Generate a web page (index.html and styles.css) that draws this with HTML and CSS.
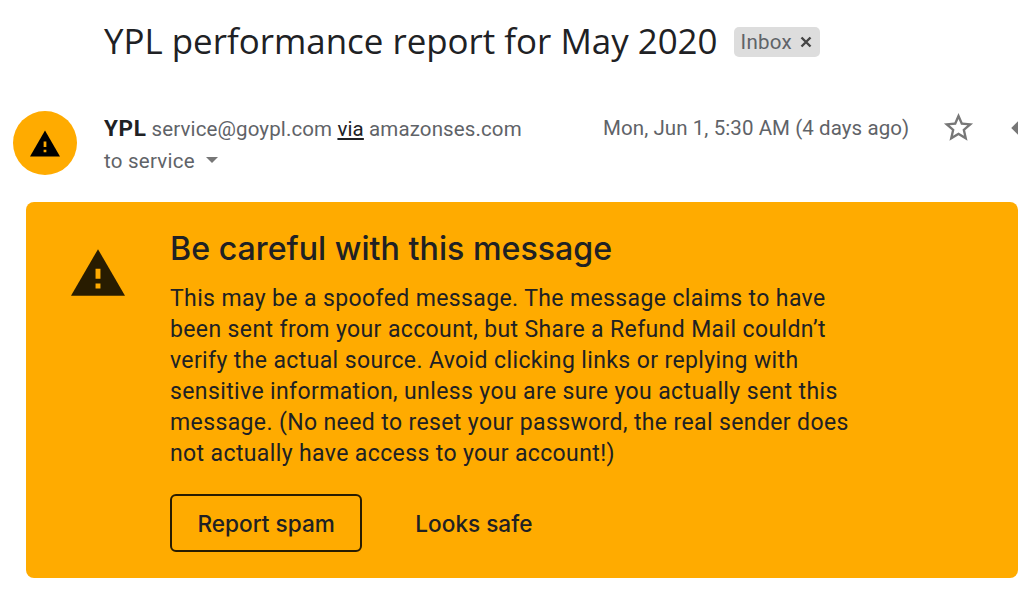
FILE: index.html
```html
<!DOCTYPE html>
<html lang="en">
<head>
    <meta charset="UTF-8">
    <meta name="viewport" content="width=device-width, initial-scale=1.0">
    <title>YPL performance report for May 2020</title>
    <link rel="stylesheet" href="styles.css">
</head>
<body>
    <div class="subject">
        <h1>YPL performance report for May 2020</h1>
        <span class="label">Inbox
            <svg class="label-x" viewBox="0 0 12 12"><path d="M1.5 1.5l9 9M10.5 1.5l-9 9"/></svg>
        </span>
    </div>

    <div class="sender">
        <div class="avatar">
            <svg class="avatar-icon" viewBox="1 2 22 19"><path d="M1 21h22L12 2 1 21z" fill="#000"/><path d="M13 18h-2v-2h2v2zm0-4h-2v-4h2v4z" fill="#ffab00"/></svg>
        </div>
        <div class="sender-info">
            <div class="from"><b>YPL</b> service@goypl.com <u>via</u> amazonses.com</div>
            <div class="to">to service <span class="caret"></span></div>
        </div>
        <div class="date">Mon, Jun 1, 5:30 AM (4 days ago)</div>
        <svg class="star" viewBox="0 0 24 24"><path d="M22 9.24l-7.19-.62L12 2 9.19 8.63 2 9.24l5.46 4.73L5.82 21 12 17.27 18.18 21l-1.63-7.03L22 9.24zM12 15.4l-3.76 2.27 1-4.28-3.32-2.88 4.38-.38L12 6.1l1.71 4.04 4.38.38-3.32 2.88 1 4.28L12 15.4z"/></svg>
        <div class="reply-clip">
            <svg class="reply" viewBox="0 0 24 24"><path d="M10 9V5l-7 7 7 7v-4.1c5 0 8.5 1.6 11 5.1-1-5-4-10-11-11z"/></svg>
        </div>
    </div>

    <div class="warning">
        <svg class="warning-icon" viewBox="1 2 22 19"><path d="M1 21h22L12 2 1 21z" fill="#281c00"/><path d="M13 18h-2v-2h2v2zm0-4h-2v-4h2v4z" fill="#ffab00"/></svg>
        <div class="warning-body">
            <h2>Be careful with this message</h2>
            <p>This may be a spoofed message. The message claims to have<br>
            been sent from your account, but Share a Refund Mail couldn’t<br>
            verify the actual source. Avoid clicking links or replying with<br>
            sensitive information, unless you are sure you actually sent this<br>
            message. (No need to reset your password, the real sender does<br>
            not actually have access to your account!)</p>
            <div class="actions">
                <button class="btn btn-outline">Report spam</button>
                <button class="btn">Looks safe</button>
            </div>
        </div>
    </div>
</body>
</html>
```

FILE: styles.css
```css
html, body {
    height: 590px;
    overflow: hidden;
}
body {
    margin: 0;
    background-color: #fff;
    font-family: Roboto, "Liberation Sans", sans-serif;
    color: #202124;
}
.subject {
    display: flex;
    align-items: center;
    gap: 16px;
    padding: 19px 0 0 104px;
    height: 45px;
}
.subject h1 {
    margin: -2px 0 0;
    font-family: "Open Sans", Roboto, sans-serif;
    font-size: 34.9px;
    font-weight: 400;
    line-height: 45px;
    white-space: nowrap;
}
.label {
    display: flex;
    align-items: center;
    gap: 8px;
    height: 30px;
    padding: 1px 8px 0 7px;
    box-sizing: border-box;
    background-color: #ddd;
    color: #5f6368;
    font-size: 20.5px;
    letter-spacing: 0.3px;
    border-radius: 5px;
    white-space: nowrap;
}
.label-x {
    width: 12px;
    height: 12px;
    stroke: #444;
    stroke-width: 2.4;
    fill: none;
}
.sender {
    display: flex;
    margin-top: 47px;
    padding-left: 13px;
    height: 65px;
}
.avatar {
    width: 64px;
    height: 64px;
    flex-shrink: 0;
    border-radius: 50%;
    background-color: #ffab00;
    display: flex;
    align-items: center;
    justify-content: center;
}
.avatar-icon {
    width: 30px;
    height: 27px;
}
.sender-info {
    margin-left: 27px;
    width: 499px;
    font-size: 20.5px;
    color: #5f6368;
}
.from {
    line-height: 32px;
    margin-top: 1px;
    letter-spacing: 0.12px;
    white-space: nowrap;
}
.from b {
    color: #202124;
    font-size: 22.5px;
    letter-spacing: 0.6px;
}
.from u {
    color: #202124;
}
.to {
    line-height: 32px;
    letter-spacing: 0.25px;
}
.caret {
    display: inline-block;
    margin-left: 6px;
    margin-bottom: 5px;
    vertical-align: middle;
    border-left: 6.5px solid transparent;
    border-right: 6.5px solid transparent;
    border-top: 6px solid #777;
}
.date {
    font-size: 20.5px;
    letter-spacing: 0.08px;
    line-height: 32px;
    margin-top: 1px;
    color: #5f6368;
    white-space: nowrap;
}
.star {
    width: 35px;
    height: 35px;
    margin: -1px 0 0 32px;
    fill: #777;
}
.reply-clip {
    width: 7px;
    height: 34px;
    margin-left: 35px;
    overflow: hidden;
    flex-shrink: 0;
}
.reply {
    width: 34px;
    height: 34px;
    margin-left: -4px;
    fill: #777;
}
.warning {
    display: flex;
    margin: 26px 6px 0 26px;
    height: 376px;
    box-sizing: border-box;
    padding: 25px 0 0 45px;
    background-color: #ffab00;
    border-radius: 8px;
}
.warning-icon {
    width: 54px;
    height: 47px;
    margin-top: 22px;
    flex-shrink: 0;
}
.warning-body {
    margin-left: 45px;
}
.warning-body h2 {
    margin: 0;
    font-family: Inter, Roboto, sans-serif;
    font-size: 32.2px;
    font-weight: 500;
    line-height: 44px;
}
.warning-body p {
    margin: 12px 0 0;
    font-size: 23px;
    letter-spacing: 0.38px;
    line-height: 31px;
    white-space: nowrap;
}
.actions {
    display: flex;
    align-items: center;
    gap: 25.5px;
    margin-top: 25px;
}
.btn {
    height: 58px;
    padding: 0 25.5px;
    background: none;
    border: 2px solid transparent;
    border-radius: 6px;
    font-family: Inter, Roboto, sans-serif;
    font-size: 22.6px;
    font-weight: 500;
    color: #202124;
}
.btn-outline {
    border-color: #281c00;
}
```
